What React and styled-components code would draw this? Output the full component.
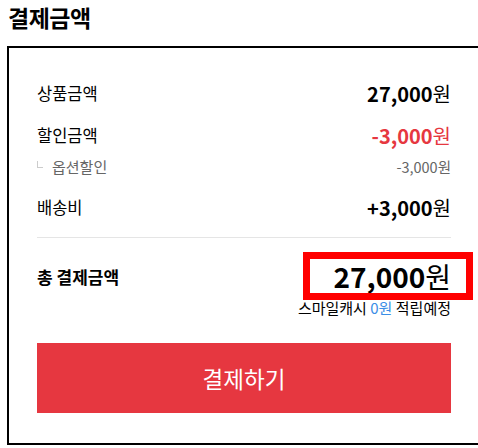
import React from "react";
import styled, { createGlobalStyle } from "styled-components";

const GlobalStyle = createGlobalStyle`
  html, body {
    margin: 0;
    padding: 0;
    overflow: hidden;
    background: #fff;
  }
  body {
    font-family: "Noto Sans CJK KR", "Noto Sans", sans-serif;
    color: #000;
  }
`;

const Page = styled.div`
  padding: 1px 0 0 7px;
  width: 480px;
`;

const Title = styled.h2`
  margin: 0 0 13px 1px;
  font-size: 23px;
  line-height: 32px;
  font-weight: 700;
  letter-spacing: -0.5px;
`;

const Box = styled.div`
  width: 414px;
  border: 2px solid #000;
  padding: 33px 28px 30px 28px;
`;

const Row = styled.div`
  display: flex;
  justify-content: space-between;
  align-items: center;
  height: ${(p) => p.$h || 24}px;
  margin-top: ${(p) => p.$mt || 0}px;
`;

const Label = styled.span`
  font-size: ${(p) => (p.$bold ? 17 : 16.5)}px;
  font-weight: ${(p) => (p.$bold ? 700 : 400)};
`;

const SubLabel = styled.span`
  display: flex;
  align-items: center;
  font-size: 15px;
  color: #666;
`;

const Corner = styled.span`
  width: 5px;
  height: 6px;
  border-left: 1px solid #ccc;
  border-bottom: 1px solid #ccc;
  margin: 0 9px 4px 0;
`;

const Price = styled.span`
  font-size: 20px;
  font-weight: 700;
  color: ${(p) => p.$color || "#000"};
  em {
    font-style: normal;
    font-weight: 400;
  }
`;

const SubPrice = styled.span`
  font-size: 14.5px;
  color: #666;
`;

const Divider = styled.hr`
  border: 0;
  border-top: 1px solid #e5e5e5;
  margin: 18px 0 0;
`;

const TotalPrice = styled.span`
  display: flex;
  align-items: center;
  justify-content: flex-end;
  width: 156px;
  height: 34px;
  box-sizing: border-box;
  padding-right: 15px;
  margin-right: -15px;
  outline: 7px solid #ff0000;
  font-size: 28px;
  font-weight: 700;
  em {
    font-style: normal;
    font-weight: 400;
  }
`;

const Cash = styled.div`
  text-align: right;
  font-size: 15px;
  line-height: 20px;
  margin-top: 5px;
  span {
    color: #3b8ee6;
  }
`;

const PayButton = styled.button`
  display: block;
  width: 100%;
  height: 70px;
  margin-top: 25px;
  border: 0;
  background: #e63740;
  color: #fff;
  font-family: inherit;
  font-size: 22.5px;
  cursor: pointer;
`;

export default function App() {
  return (
    <Page>
      <GlobalStyle />
      <Title>결제금액</Title>
      <Box>
        <Row>
          <Label>상품금액</Label>
          <Price>
            27,000<em>원</em>
          </Price>
        </Row>
        <Row $mt={18}>
          <Label>할인금액</Label>
          <Price $color="#e63740">
            -3,000<em>원</em>
          </Price>
        </Row>
        <Row $h={20} $mt={9}>
          <SubLabel>
            <Corner />
            옵션할인
          </SubLabel>
          <SubPrice>-3,000원</SubPrice>
        </Row>
        <Row $mt={19}>
          <Label>배송비</Label>
          <Price>
            +3,000<em>원</em>
          </Price>
        </Row>
        <Divider />
        <Row $h={34} $mt={21}>
          <Label $bold>총 결제금액</Label>
          <TotalPrice>
            27,000<em>원</em>
          </TotalPrice>
        </Row>
        <Cash>
          스마일캐시 <span>0원</span> 적립예정
        </Cash>
        <PayButton>결제하기</PayButton>
      </Box>
    </Page>
  );
}
